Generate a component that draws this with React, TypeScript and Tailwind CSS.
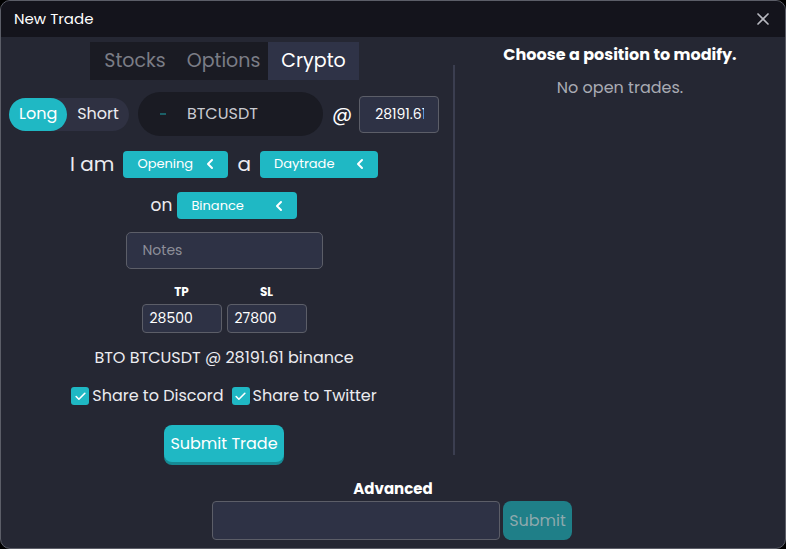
import { X, ChevronLeft, Check } from "lucide-react";

const font = { fontFamily: '"Poppins", "Open Sans", "Liberation Sans", sans-serif' };

function Select({ label, width }: { label: string; width: string }) {
  return (
    <button
      className={`${width} h-[27px] rounded-[4px] bg-[#1fb8c4] flex items-center justify-between pl-[14px] pr-[10px] text-[13px] text-white`}
    >
      <span>{label}</span>
      <ChevronLeft className="h-4 w-4" strokeWidth={3} />
    </button>
  );
}

function Checkbox({ label }: { label: string }) {
  return (
    <label className="flex items-center gap-[3px] text-[16px] leading-[22px] text-[#ececf0]">
      <span className="w-[18px] h-[18px] rounded-[3px] bg-[#1fb8c4] flex items-center justify-center">
        <Check className="h-[13px] w-[13px] text-white" strokeWidth={3} />
      </span>
      {label}
    </label>
  );
}

export default function App() {
  return (
    <div className="w-[786px] h-[549px] bg-black" style={font}>
      <div className="w-full h-full rounded-[10px] border border-[#5c5e68] bg-[#252733] overflow-hidden flex flex-col">
        <header className="h-[36px] bg-[#14141c] flex items-center justify-between pl-[13px] pr-[12px] shrink-0">
          <h1 className="text-[15px] text-white">New Trade</h1>
          <X className="h-5 w-5 text-[#b8b9c0]" strokeWidth={2} />
        </header>

        <div className="flex h-[434px]">
          <section className="w-[446px] flex flex-col items-center pt-[5px]">
            <div className="flex h-[38px] bg-[#1a1b23] text-[19px] ml-[1px]">
              <button className="pl-[14px] pr-[10px] text-[#7b7d86]">Stocks</button>
              <button className="pl-[11px] pr-[8px] text-[#7b7d86]">Options</button>
              <button className="pl-[13px] pr-[13px] bg-[#2f3347] text-white">Crypto</button>
            </div>

            <div className="flex items-center w-full pl-[8px] mt-[12px]">
              <div className="flex h-[33px] rounded-full bg-[#2f3142] text-[16px]">
                <button className="px-[10px] rounded-full bg-[#1fb8c4] text-white">Long</button>
                <button className="px-[10px] text-[#ececf0]">Short</button>
              </div>
              <div className="ml-[9px] w-[185px] h-[44px] rounded-full bg-[#1a1b23] flex items-center pl-[22px]">
                <span className="w-[6px] h-[2px] bg-[#1b5f66]" />
                <span className="ml-[21px] text-[16px] text-[#c9cad0]">BTCUSDT</span>
              </div>
              <span className="ml-[9px] text-[20px] text-white">@</span>
              <div className="ml-[7px] w-[80px] h-[37px] rounded-[4px] border border-[#5c5e68] bg-[#2e3245] flex items-center pl-[15px] overflow-hidden">
                <span className="text-[14px] text-white whitespace-nowrap w-[49px] overflow-hidden">28191.61</span>
              </div>
            </div>

            <div className="flex items-center gap-[9px] mt-[13px]">
              <span className="text-[20px] text-[#ececf0]">I am</span>
              <Select label="Opening" width="w-[105px]" />
              <span className="text-[20px] text-[#ececf0]">a</span>
              <Select label="Daytrade" width="w-[118px]" />
            </div>

            <div className="flex items-center gap-[5px] mt-[13px]">
              <span className="text-[17px] text-[#ececf0]">on</span>
              <Select label="Binance" width="w-[120px]" />
            </div>

            <div className="mt-[13px] w-[197px] h-[37px] rounded-[5px] border border-[#5c5e68] bg-[#2e3245] flex items-center pl-[16px] text-[14px] text-[#8d8f99]">
              Notes
            </div>

            <div className="flex gap-[5px] mt-[15px]">
              {[
                ["TP", "28500"],
                ["SL", "27800"],
              ].map(([k, v]) => (
                <div key={k} className="flex flex-col items-center">
                  <span className="text-[12px] leading-[16px] font-bold text-white">{k}</span>
                  <div className="mt-[4px] w-[80px] h-[29px] rounded-[4px] border border-[#5c5e68] bg-[#2e3245] flex items-center pl-[7px] text-[14px] text-white">
                    {v}
                  </div>
                </div>
              ))}
            </div>

            <p className="mt-[15px] text-[16px] leading-[20px] text-[#ececf0]">BTO BTCUSDT @ 28191.61 binance</p>

            <div className="flex gap-[8px] mt-[17px]">
              <Checkbox label="Share to Discord" />
              <Checkbox label="Share to Twitter" />
            </div>

            <button className="mt-[18px] h-[37px] px-[6px] rounded-[8px] bg-[#1fb8c4] shadow-[0_3px_0_#168b95] text-[16px] text-white">
              Submit Trade
            </button>
          </section>

          <div className="w-[2px] bg-[#3b3e50] mt-[28px] mb-[16px] ml-[6px]" />

          <section className="flex-1 flex flex-col items-center pt-[6px]">
            <h2 className="text-[16px] leading-[24px] font-bold text-white">Choose a position to modify.</h2>
            <p className="mt-[9px] text-[16px] leading-[24px] text-[#a9abb3]">No open trades.</p>
          </section>
        </div>

        <div className="flex flex-col items-center mt-[8px]">
          <span className="text-[15px] leading-[20px] font-bold text-white">Advanced</span>
          <div className="flex items-center gap-[3px] mt-[2px] ml-[-2px]">
            <div className="w-[288px] h-[39px] rounded-[4px] border border-[#5c5e68] bg-[#2e3245]" />
            <button className="w-[69px] h-[39px] rounded-[8px] bg-[#1f7f88] text-[16px] text-[#8ea9ad]">Submit</button>
          </div>
        </div>
      </div>
    </div>
  );
}
